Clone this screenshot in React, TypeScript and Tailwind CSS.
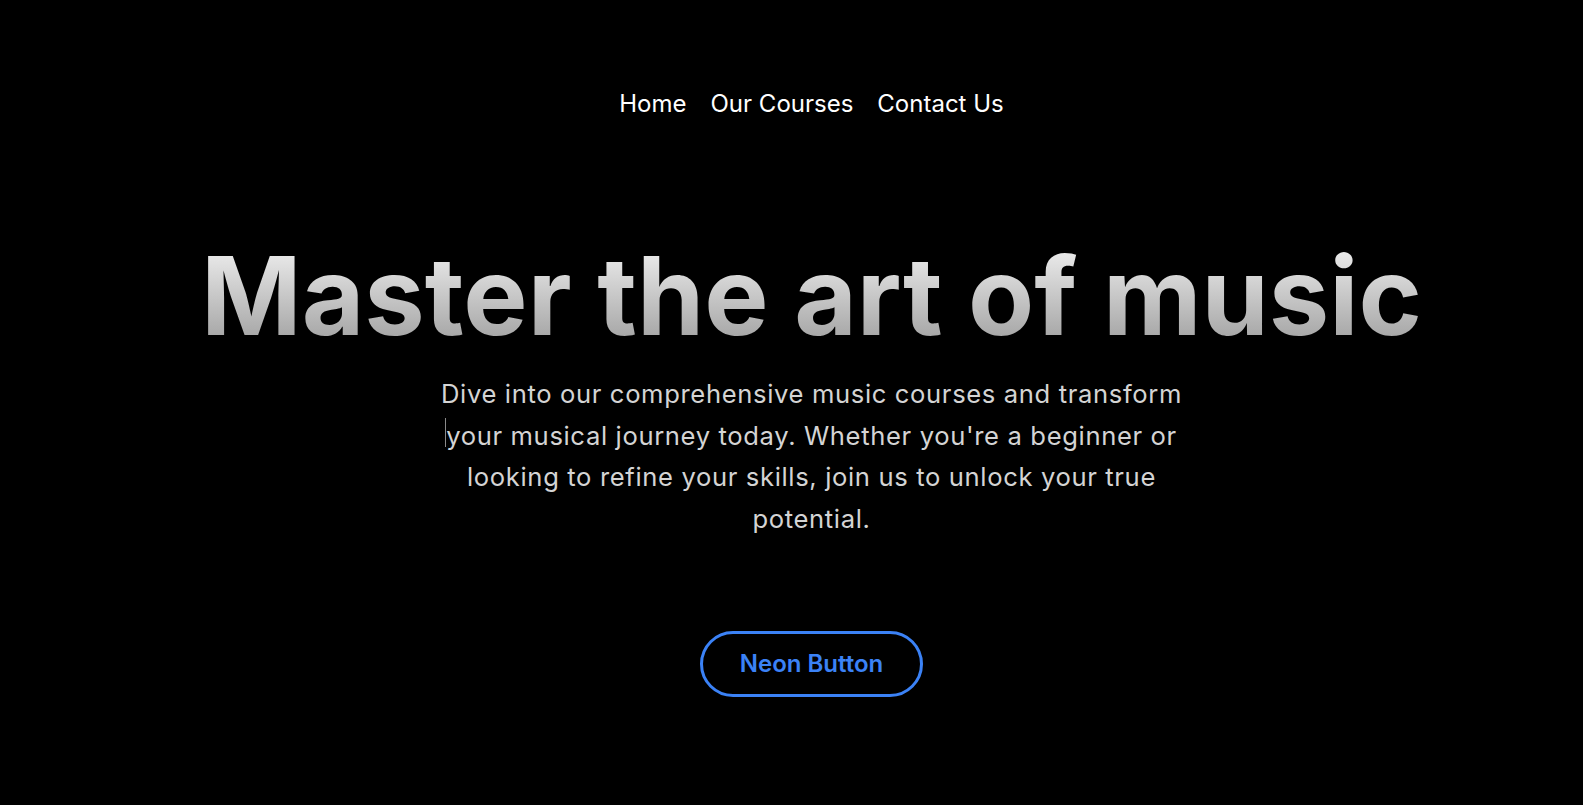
export default function App() {
  return (
    <div className="min-h-screen w-full bg-black flex flex-col items-center pl-[40px]" style={{ fontFamily: "Inter, 'Noto Sans', sans-serif" }}>
      <nav className="mt-[86px] flex items-center gap-6 text-[24px] leading-[36px] text-white">
        <a>Home</a>
        <a>Our Courses</a>
        <a>Contact Us</a>
      </nav>
      <h1 className="mt-[120px] text-[108px] font-bold leading-none bg-gradient-to-b from-[#f2f2f2] to-[#9e9e9e] bg-clip-text text-transparent">
        Master the art of music
      </h1>
      <p className="relative mt-[23px] max-w-3xl text-center text-[25.6px] leading-[41.6px] tracking-wide text-[#d4d4d4]">
        <span className="absolute left-[17px] top-[45px] h-[29px] w-px bg-[#8a8a8a]" />
        Dive into our comprehensive music courses and transform your musical journey today. Whether you're a beginner or looking to refine your skills, join us to unlock your true potential.
      </p>
      <button className="mt-[92px] w-[223px] h-[66px] rounded-full border-[3px] border-[#3b82f6] text-[24px] font-semibold text-[#3b82f6]">
        Neon Button
      </button>
    </div>
  );
}
